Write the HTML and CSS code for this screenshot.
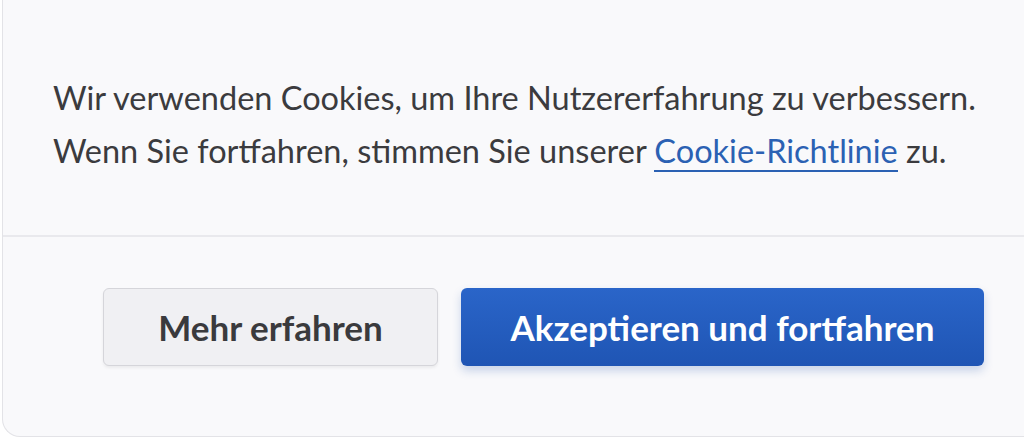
FILE: index.html
```html
<!DOCTYPE html>
<html lang="de">
<head>
<meta charset="utf-8">
<title>Cookies</title>
<link rel="stylesheet" href="styles.css">
</head>
<body>
<div class="card">
  <div class="message">
    <p>Wir verwenden Cookies, um Ihre Nutzererfahrung zu verbessern.</p>
    <p>Wenn Sie fortfahren, stimmen Sie unserer <a href="#" class="link">Cookie-Richtlinie</a> zu.</p>
  </div>
  <div class="divider"></div>
  <div class="actions">
    <button class="btn btn-secondary">Mehr erfahren</button>
    <button class="btn btn-primary">Akzeptieren und fortfahren</button>
  </div>
</div>
</body>
</html>
```
FILE: styles.css
```css
html, body {
  margin: 0;
  padding: 0;
  background: #ffffff;
  overflow: hidden;
}
body {
  font-family: Lato, "Open Sans", sans-serif;
  color: #3b3b3e;
}
.card {
  margin-left: 2px;
  width: calc(100% + 20px);
  height: 437px;
  box-sizing: border-box;
  background: #f9f9fb;
  border-left: 1px solid #e3e3e7;
  border-bottom: 1px solid #e3e3e7;
  border-bottom-left-radius: 18px;
  display: flex;
  flex-direction: column;
}
.message {
  padding: 71px 0 0 50px;
  height: 235px;
  box-sizing: border-box;
}
.message p {
  margin: 0;
  font-size: 32.5px;
  line-height: 53px;
}
.link {
  color: #2b61b3;
  text-decoration: none;
  border-bottom: 2px solid #2b61b3;
  padding-bottom: 0;
}
.divider {
  height: 2px;
  background: #e9e9ed;
}
.actions {
  display: flex;
  gap: 23px;
  padding: 51px 0 0 100px;
}
.btn {
  height: 78px;
  border-radius: 6px;
  font-family: Lato, "Open Sans", sans-serif;
  font-weight: 700;
  font-size: 35px;
  cursor: pointer;
  padding: 0;
}
.btn-secondary {
  width: 335px;
  background: #f0f0f3;
  border: 1px solid #d5d5da;
  color: #3a3a3d;
  box-shadow: 0 2px 3px rgba(0,0,0,0.06);
}
.btn-primary {
  width: 523px;
  background: linear-gradient(#2a65c9, #1f55b4);
  border: none;
  color: #ffffff;
  box-shadow: 0 5px 10px rgba(30, 80, 170, 0.22);
}
```
